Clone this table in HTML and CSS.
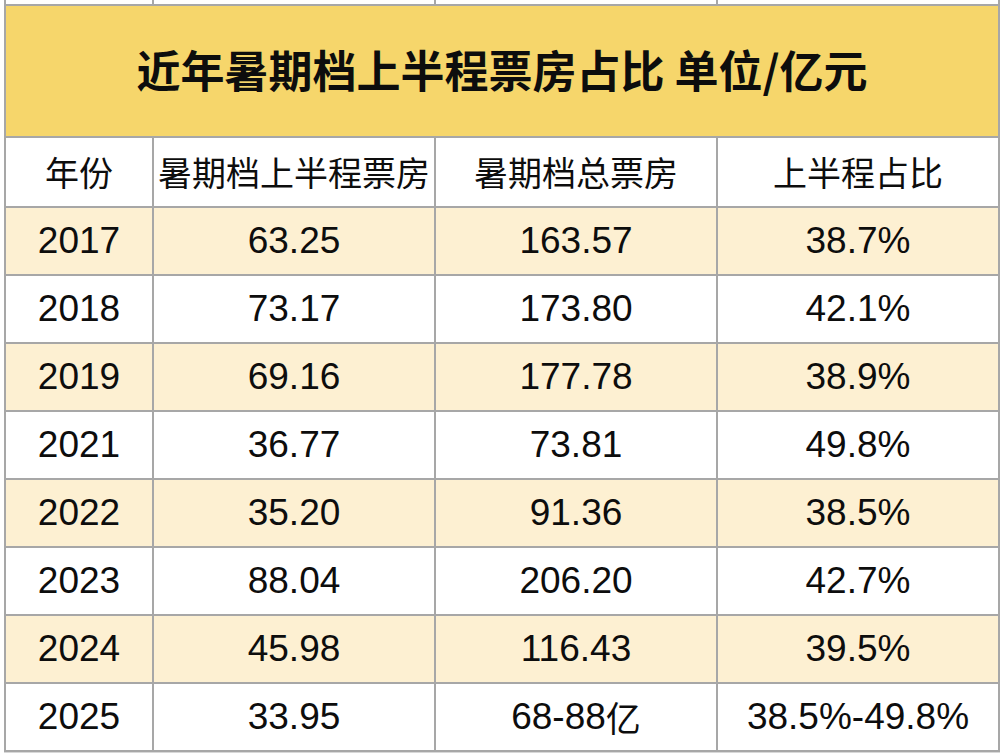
FILE: index.html
```html
<!DOCTYPE html>
<html lang="zh-CN">
<head>
<meta charset="utf-8">
<title>近年暑期档上半程票房占比</title>
<link rel="stylesheet" href="styles.css">
</head>
<body>
<div class="sheet">
  <div class="cell strip"></div><div class="cell strip"></div><div class="cell strip"></div><div class="cell strip"></div>
  <div class="cell title">近年暑期档上半程票房占比 单位/亿元</div>
  <div class="cell head">年份</div><div class="cell head">暑期档上半程票房</div><div class="cell head">暑期档总票房</div><div class="cell head">上半程占比</div>
  <div class="cell alt">2017</div><div class="cell alt">63.25</div><div class="cell alt">163.57</div><div class="cell alt">38.7%</div>
  <div class="cell">2018</div><div class="cell">73.17</div><div class="cell">173.80</div><div class="cell">42.1%</div>
  <div class="cell alt">2019</div><div class="cell alt">69.16</div><div class="cell alt">177.78</div><div class="cell alt">38.9%</div>
  <div class="cell">2021</div><div class="cell">36.77</div><div class="cell">73.81</div><div class="cell">49.8%</div>
  <div class="cell alt">2022</div><div class="cell alt">35.20</div><div class="cell alt">91.36</div><div class="cell alt">38.5%</div>
  <div class="cell">2023</div><div class="cell">88.04</div><div class="cell">206.20</div><div class="cell">42.7%</div>
  <div class="cell alt">2024</div><div class="cell alt">45.98</div><div class="cell alt">116.43</div><div class="cell alt">39.5%</div>
  <div class="cell">2025</div><div class="cell">33.95</div><div class="cell">68-88<span class="cjk">亿</span></div><div class="cell">38.5%-49.8%</div>
</div>
</body>
</html>
```

FILE: styles.css
```css
html, body {
  margin: 0;
  padding: 0;
  background: #ffffff;
}

.sheet {
  margin-left: 4px;
  width: 996px;
  box-sizing: border-box;
  display: grid;
  grid-template-columns: 146px 280px 280px 280px;
  grid-template-rows: 4px 130px 68px repeat(8, 66px);
  gap: 2px;
  padding: 0 2px 2px 2px;
  background: #a7a7a7;
  border-bottom: 1px solid #d8d8d8;
  font-family: "Liberation Sans", "Noto Sans CJK SC", sans-serif;
  color: #0d0d0d;
}

.cell {
  background: #ffffff;
  display: flex;
  align-items: center;
  justify-content: center;
  font-size: 37px;
  line-height: 1.15;
  white-space: nowrap;
}

.cjk {
  font-family: "Noto Sans CJK SC", sans-serif;
  font-size: 35px;
  line-height: 0;
}

.strip {
  background: #ffffff;
}

.title {
  grid-column: 1 / -1;
  background: #f6d66b;
  font-family: "Noto Sans CJK SC", sans-serif;
  font-weight: 700;
  font-size: 44px;
  padding-bottom: 4px;
}

.head {
  font-family: "Noto Sans CJK SC", sans-serif;
  font-size: 34px;
}

.alt {
  background: #fdf0d2;
}
```
